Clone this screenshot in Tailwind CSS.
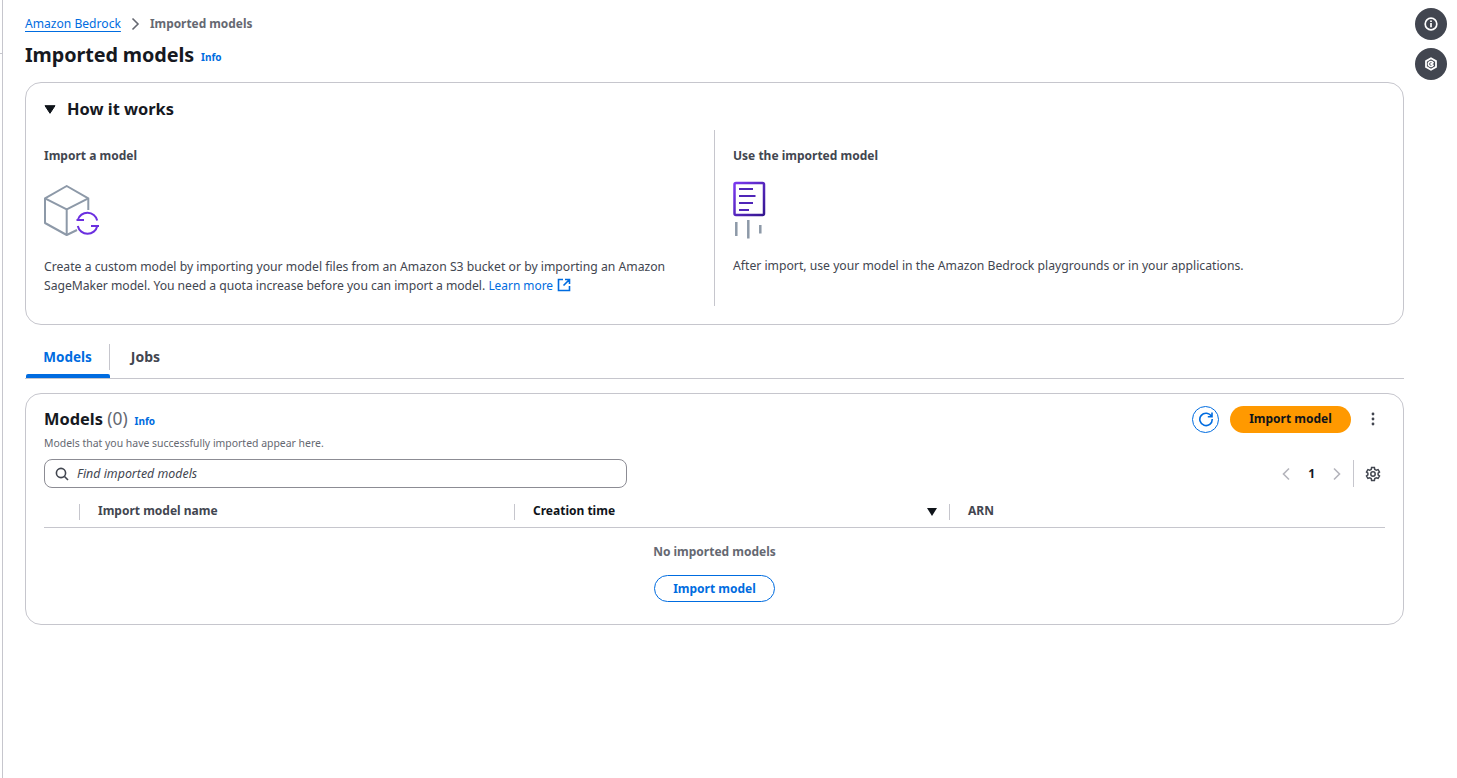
<!DOCTYPE html>
<html lang="en">
<head>
  <meta charset="UTF-8" />
  <title>Imported models | Amazon Bedrock</title>
  <script src="https://cdn.jsdelivr.net/npm/@tailwindcss/browser@4"></script>
</head>
<body class="bg-white text-[#16191f] font-['Noto_Sans','Open_Sans',sans-serif] text-[12px] overflow-hidden">
  <div class="relative h-[778px] w-[1457px] overflow-hidden">
    <!-- Left nav edge -->
    <div class="absolute left-[2px] top-0 bottom-0 w-px bg-[#c6c6cd]"></div>
    <div class="absolute left-0 top-[53px] h-px w-[2px] bg-[#c6c6cd]"></div>

    <!-- Right rail -->
    <div class="absolute left-[1415px] top-[8px] flex flex-col gap-[8px]">
      <button class="flex h-[32px] w-[32px] items-center justify-center rounded-full bg-[#424650]">
        <svg width="14" height="14" viewBox="0 0 14 14" fill="none" stroke="white" stroke-width="1.7"><circle cx="7" cy="7" r="5.8"/><path d="M7 6v4.2M7 3.5v1.6"/></svg>
      </button>
      <button class="flex h-[32px] w-[32px] items-center justify-center rounded-full bg-[#424650]">
        <svg width="14" height="14" viewBox="0 0 14 14" fill="none" stroke="white" stroke-width="1.8"><path d="M7 1.200l5 2.900v5.800L7 12.800l-5-2.900V4.100z"/><path d="M9 5.700A2.500 2.500 0 1 0 9 8.300L7 7z" stroke-width="1.600"/></svg>
      </button>
    </div>

    <main class="ml-[25px] w-[1379px]">
      <!-- Breadcrumb -->
      <nav class="flex h-[16px] mt-[16px] items-center text-[12.1px] leading-[16px]">
        <a class="text-[#006ce0] underline underline-offset-[3px]">Amazon Bedrock</a>
        <svg class="ml-[10px] mr-[10px]" width="9" height="14" viewBox="0 0 9 14" fill="none" stroke="#656871" stroke-width="1.6"><path d="M1.500 1.500l5.500 5.500-5.500 5.500"/></svg>
        <span class="-mt-[3px] text-[11.9px] font-bold text-[#656871]">Imported models</span>
      </nav>

      <!-- Header -->
      <div class="mt-[9px] flex h-[28px] items-center">
        <h1 class="text-[19.8px] font-bold leading-[28px] tracking-[-0.1px]">Imported models</h1>
        <a class="ml-[7px] mt-[4px] text-[10px] font-bold text-[#006ce0]">Info</a>
      </div>

      <!-- How it works -->
      <section class="mt-[13px] h-[243px] rounded-[16px] border border-[#c6c6cd] px-[18px] pt-[15px]">
        <div class="flex h-[22px] items-center">
          <svg width="12" height="9" viewBox="0 0 12 9" fill="#0f141a" stroke="#0f141a" stroke-linejoin="round"><path d="M1 0.700h10L6 8.300z"/></svg>
          <h2 class="ml-[11px] text-[16.4px] font-bold leading-[22px]">How it works</h2>
        </div>
        <div class="mt-[10px] flex h-[176px]">
          <div class="w-[671px] border-r border-[#c6c6cd] pt-[17px]">
            <h3 class="text-[12px] font-bold leading-[18px] text-[#424650]">Import a model</h3>
            <svg class="mt-[20px] block" width="60" height="54" viewBox="0 0 60 54" fill="none">
              <g stroke="#8d99a8" stroke-width="2" stroke-linejoin="round">
                <path d="M44.300 25V13.300L22.700 1 1 13.300V38L22.700 50 33 45"/>
                <path d="M1 13.300L22.700 24.300 44.300 13.300M22.700 24.300V50"/>
              </g>
              <g stroke="#6b2fe0" stroke-width="2" fill="none">
                <path d="M40 35H32.500M33.800 35A10 10 0 0 1 53.200 35.500"/>
                <path d="M47 41H55M53.300 41A10 10 0 0 1 33.800 41"/>
              </g>
            </svg>
            <p class="mt-[19px] w-[640px] text-[12.2px] leading-[18px] text-[#424650]">Create a custom model by importing your model files from an Amazon S3 bucket or by importing an Amazon <span class="tracking-[-0.04px]">SageMaker model. You need a quota increase before you can import a model.</span> <a class="text-[11.9px] text-[#006ce0]">Learn more</a><svg class="ml-[4px] inline-block align-[-2px]" width="14" height="14" viewBox="0 0 14 14" fill="none" stroke="#006ce0" stroke-width="1.6"><path d="M6 1.500H1.500v11h11V8M8 1.500h4.500V6M12.500 1.500L6.500 7.500"/></svg></p>
          </div>
          <div class="flex-1 pl-[18px] pt-[17px]">
            <h3 class="text-[12px] font-bold leading-[18px] text-[#424650]">Use the imported model</h3>
            <svg class="mt-[16px] block" width="34" height="58" viewBox="0 0 34 58" fill="none">
              <defs><linearGradient id="doc" x1="0" y1="0" x2="1" y2="1"><stop offset="0" stop-color="#7a38f0"/><stop offset="1" stop-color="#34168f"/></linearGradient></defs>
              <rect x="1.500" y="2" width="29.500" height="32" rx="1.500" stroke="url(#doc)" stroke-width="2.500"/>
              <path d="M6 8h14M6 15h16.500M6 22h14M6 29h10" stroke="#4f25b8" stroke-width="2.200"/>
              <path d="M3.300 41v14M15.300 39v18.500M27.300 44v8.500" stroke="#8d99a8" stroke-width="2.500"/>
            </svg>
            <p class="mt-[18px] text-[12.2px] leading-[18px] text-[#424650]">After import, use your model in the Amazon Bedrock playgrounds or in your applications.</p>
          </div>
        </div>
      </section>

      <!-- Tabs -->
      <div class="mt-[15px] flex h-[39px] items-start border-b border-[#c6c6cd]">
        <div class="relative flex h-[38px] w-[85px] items-center justify-center">
          <span class="-mt-[5px] text-[13.5px] font-bold leading-[20px] text-[#006ce0]">Models</span>
          <div class="absolute bottom-0 left-[1px] right-0 h-[4px] rounded-t-[2px] bg-[#006ce0]"></div>
          <div class="absolute right-0 top-[4px] h-[26px] w-px bg-[#c6c6cd]"></div>
        </div>
        <div class="flex h-[38px] w-[71px] items-center justify-center">
          <span class="-mt-[5px] text-[14px] font-bold leading-[20px] text-[#424650]">Jobs</span>
        </div>
      </div>

      <!-- Models table -->
      <section class="mt-[14px] h-[232px] rounded-[16px] border border-[#c6c6cd] px-[18px] pt-[12px]">
        <div class="flex h-[26px] items-center">
          <h2 class="text-[16.4px] font-bold leading-[26px]">Models <span class="text-[17.4px] font-normal leading-none text-[#656871]">(0)</span></h2>
          <a class="ml-[7px] mt-[4px] text-[10px] font-bold text-[#006ce0]">Info</a>
          <div class="ml-auto flex items-center">
            <button class="flex h-[27px] w-[27px] items-center justify-center rounded-full border border-[#006ce0]">
              <svg width="16" height="16" viewBox="0 0 16 16" fill="none" stroke="#006ce0" stroke-width="1.6"><path d="M13.500 5.500A6.200 6.200 0 1 0 14.200 8M14 1.500v4.200H9.800"/></svg>
            </button>
            <button class="ml-[11px] h-[27px] w-[121px] rounded-full bg-[#ff9900] text-[12px] font-bold text-[#0f141a]">Import model</button>
            <svg class="ml-[14px] mr-[4px]" width="16" height="16" viewBox="0 0 16 16" fill="#424650"><circle cx="8" cy="3" r="1.400"/><circle cx="8" cy="8" r="1.400"/><circle cx="8" cy="13" r="1.400"/></svg>
          </div>
        </div>
        <p class="mt-[4px] text-[10.45px] leading-[14px] text-[#656871]">Models that you have successfully imported appear here.</p>

        <div class="mt-[9px] flex h-[29px] items-center">
          <div class="flex h-[29px] w-[583px] items-center rounded-[8px] border border-[#8c8c94] pl-[10px]">
            <svg width="14" height="14" viewBox="0 0 14 14" fill="none" stroke="#424650" stroke-width="1.600"><circle cx="6" cy="6" r="4.600"/><path d="M9.500 9.500l3.500 3.500"/></svg>
            <span class="ml-[8px] mt-[1px] text-[12.4px] italic text-[#424650]">Find imported models</span>
          </div>
          <div class="ml-auto flex items-center">
            <svg width="10" height="14" viewBox="0 0 10 14" fill="none" stroke="#b4b4bb" stroke-width="1.600"><path d="M8 1.500L2.500 7 8 12.500"/></svg>
            <span class="ml-[17px] text-[12px] font-bold">1</span>
            <svg class="ml-[17px]" width="10" height="14" viewBox="0 0 10 14" fill="none" stroke="#b4b4bb" stroke-width="1.600"><path d="M2 1.500L7.500 7 2 12.500"/></svg>
            <div class="ml-[11px] h-[27px] w-px bg-[#c6c6cd]"></div>
            <svg class="ml-[11px] mr-[4px]" width="16" height="16" viewBox="0 0 16 16" fill="none" stroke="#424650" stroke-width="1.500"><circle cx="8" cy="8" r="2.200"/><path d="M6.600 1.600h2.800l.4 1.900 1.500.8 1.800-.7 1.400 2.400-1.400 1.200v1.600l1.400 1.200-1.400 2.400-1.800-.7-1.500.8-.4 1.900H6.600l-.4-1.900-1.500-.8-1.800.7-1.400-2.400 1.400-1.200V7.200L1.500 6l1.400-2.400 1.800.7 1.500-.8z"/></svg>
          </div>
        </div>

        <!-- Table header -->
        <div class="mt-[8px] flex h-[32px] items-center border-b border-[#c6c6cd] text-[12px] font-bold text-[#424650]">
          <div class="h-[16px] w-[36px] border-r border-[#c6c6cd]"></div>
          <div class="h-[16px] w-[435px] border-r border-[#c6c6cd] pl-[18px] leading-[14px]">Import model name</div>
          <div class="flex h-[16px] w-[435px] items-start justify-between border-r border-[#c6c6cd] pl-[18px] pr-[12px] leading-[14px] text-[#0f141a]">Creation time
            <svg class="mt-[4px]" width="10" height="8" viewBox="0 0 10 8" fill="#0f141a"><path d="M0 0h10L5 8z"/></svg>
          </div>
          <div class="h-[16px] pl-[18px] leading-[14px]">ARN</div>
        </div>

        <!-- Empty state -->
        <div class="mt-[15px] flex flex-col items-center">
          <p class="text-[12px] font-bold leading-[18px] text-[#656871]">No imported models</p>
          <button class="mt-[14px] h-[27px] w-[121px] rounded-full border border-[#006ce0] text-[12px] font-bold text-[#006ce0]">Import model</button>
        </div>
      </section>
    </main>
  </div>
</body>
</html>
